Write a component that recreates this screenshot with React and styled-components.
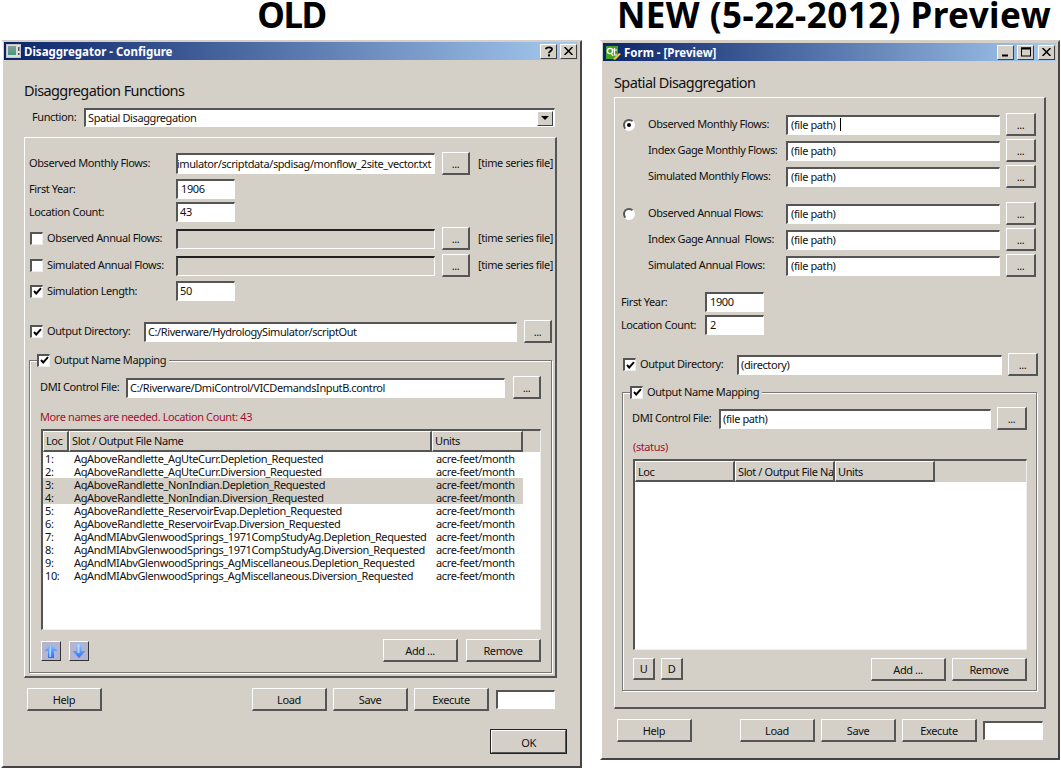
import React from "react";
import styled, { createGlobalStyle } from "styled-components";

const Global = createGlobalStyle`
  html, body { margin: 0; padding: 0; background: #fff; }
  body { font-family: "Noto Sans", "Liberation Sans", sans-serif; font-size: 11px; letter-spacing: -0.4px; color: #111; }
`;

const Page = styled.div`
  width: 1061px;
  height: 769px;
  display: flex;
  overflow: hidden;
`;
const Column = styled.div`
  width: ${(p) => p.$w}px;
  margin-left: ${(p) => p.$left}px;
  display: flex;
  flex-direction: column;
`;
const Heading = styled.h1`
  margin: 0;
  height: 40px;
  line-height: 30px;
  font-size: 35px;
  font-weight: 700;
  color: #000;
  white-space: nowrap;
  text-align: center;
  letter-spacing: ${(p) => p.$ls}px;
  transform: translateX(${(p) => p.$shift || 0}px);
`;
const Win = styled.div`
  height: ${(p) => p.$h}px;
  box-sizing: border-box;
  background: #d4d0c8;
  border-top: 2px solid #d4d0c8;
  border-left: 2px solid #fff;
  border-right: 2px solid #444;
  border-bottom: 2px solid #444;
  padding: ${(p) => p.$pt}px 2px 0 1px;
  display: flex;
  flex-direction: column;
`;
const TitleBar = styled.div`
  height: 18px;
  flex: none;
  display: flex;
  align-items: center;
  background: linear-gradient(90deg, #0a246a 0%, #a6caf0 100%);
  color: #fff;
  font-weight: 700;
  font-size: 11.5px;
  letter-spacing: 0;
  padding: 0 1px 0 2px;
  gap: 3px;
`;
const TitleText = styled.span`
  flex: 1;
  white-space: nowrap;
`;
const CapBtn = styled.div`
  width: 17px;
  height: 15px;
  box-sizing: border-box;
  background: #d4d0c8;
  border-top: 1px solid #fff;
  border-left: 1px solid #fff;
  border-right: 1px solid #404040;
  border-bottom: 1px solid #404040;
  margin-left: ${(p) => p.$gap || 0}px;
  display: flex;
  align-items: center;
  justify-content: center;
  svg { display: block; }
`;
const Body = styled.div`
  flex: 1;
  display: flex;
  flex-direction: column;
  padding-left: ${(p) => p.$pad}px;
  min-height: 0;
`;
const BigTitle = styled.div`
  font-size: 14.5px;
  letter-spacing: -0.6px;
  height: 20px;
  line-height: 20px;
  margin-top: ${(p) => p.$top}px;
  white-space: nowrap;
`;
const Row = styled.div`
  display: flex;
  align-items: center;
  height: ${(p) => p.$h || 23}px;
  margin-top: ${(p) => p.$top || 0}px;
  margin-left: ${(p) => p.$left || 0}px;
  flex: none;
`;
const Label = styled.span`
  width: ${(p) => (p.$w ? `${p.$w}px` : "auto")};
  flex: none;
  white-space: nowrap;
  padding-bottom: 2px;
  color: ${(p) => p.$color || "#111"};
  ${(p) => p.$right && `margin-left: ${p.$right}px;`}
`;
const Field = styled.div`
  width: ${(p) => p.$w}px;
  height: ${(p) => p.$h || 20}px;
  box-sizing: border-box;
  flex: none;
  background: ${(p) => (p.$off ? "#d4d0c8" : "#fff")};
  border-top: 2px solid ${(p) => (p.$off ? "#222" : "#555")};
  border-left: 2px solid ${(p) => (p.$off ? "#444" : "#555")};
  border-right: 1px solid #fff;
  border-bottom: 1px solid #fff;
  padding-left: ${(p) => p.$pad ?? 2}px;
  padding-right: ${(p) => (p.$end ? 3 : 0)}px;
  padding-bottom: 2px;
  margin-left: ${(p) => p.$left || 0}px;
  display: flex;
  align-items: center;
  justify-content: ${(p) => (p.$end ? "flex-end" : "flex-start")};
  overflow: hidden;
  white-space: nowrap;
  line-height: 1;
`;
const FieldText = styled.span`
  flex: none;
`;
const Caret = styled.i`
  width: 1px;
  height: 13px;
  background: #000;
  margin-left: 5px;
`;
const Arrow = styled.div`
  margin-left: auto;
  margin-bottom: -2px;
  width: 16px;
  height: 15px;
  box-sizing: border-box;
  background: #d4d0c8;
  border-top: 1px solid #fff;
  border-left: 1px solid #fff;
  border-right: 1px solid #404040;
  border-bottom: 1px solid #404040;
  margin-right: 1px;
  display: flex;
  align-items: center;
  justify-content: center;
  &::after {
    content: "";
    border-left: 4px solid transparent;
    border-right: 4px solid transparent;
    border-top: 4px solid #000;
  }
`;
const Btn = styled.div`
  width: ${(p) => p.$w || 75}px;
  height: ${(p) => p.$h || 23}px;
  box-sizing: border-box;
  flex: none;
  background: #d4d0c8;
  border-top: 1px solid #fff;
  border-left: 1px solid #fff;
  border-right: 2px solid #555;
  border-bottom: 2px solid #555;
  margin-left: ${(p) => p.$left || 0}px;
  display: flex;
  align-items: center;
  justify-content: center;
  line-height: 1;
  padding-top: 1px;
`;
const OkBtn = styled(Btn)`
  outline: 1px solid #222;
  outline-offset: -1px;
  border-width: 2px;
  border-right-color: #555;
  border-bottom-color: #555;
`;
const Check = styled.div`
  width: 13px;
  height: 13px;
  box-sizing: border-box;
  flex: none;
  background: #fff;
  border-top: 2px solid #555;
  border-left: 2px solid #555;
  border-right: 1px solid #eee;
  border-bottom: 1px solid #eee;
  margin-left: ${(p) => p.$left || 0}px;
  margin-right: ${(p) => p.$right || 0}px;
  display: flex;
  align-items: center;
  justify-content: center;
  svg { display: block; }
`;
const Radio = styled.div`
  width: 12px;
  height: 12px;
  flex: none;
  box-sizing: border-box;
  border-radius: 50%;
  background: #fff;
  border: 2px solid;
  border-color: #555 #fff #fff #555;
  margin-left: ${(p) => p.$left}px;
  margin-right: ${(p) => p.$right}px;
  display: flex;
  align-items: center;
  justify-content: center;
  &::after {
    content: "";
    display: ${(p) => (p.$on ? "block" : "none")};
    width: 4px;
    height: 4px;
    border-radius: 50%;
    background: #000;
  }
`;
const Panel = styled.div`
  box-sizing: border-box;
  width: ${(p) => p.$w}px;
  height: ${(p) => p.$h}px;
  margin-top: ${(p) => p.$top}px;
  flex: none;
  border-top: 1px solid #fff;
  border-left: 1px solid #fff;
  border-right: 2px solid #555;
  border-bottom: 2px solid #555;
  padding-left: ${(p) => p.$pad}px;
  display: flex;
  flex-direction: column;
`;
const Group = styled.div`
  position: relative;
  box-sizing: border-box;
  width: ${(p) => p.$w}px;
  height: ${(p) => p.$h}px;
  margin-top: ${(p) => p.$top}px;
  margin-left: ${(p) => p.$left}px;
  flex: none;
  border: 1px solid #777;
  box-shadow: inset 1px 1px 0 #fff, 1px 1px 0 #fff;
  padding-left: ${(p) => p.$pad}px;
  display: flex;
  flex-direction: column;
`;
const Legend = styled.div`
  position: absolute;
  left: ${(p) => p.$x}px;
  top: -8px;
  height: 14px;
  background: #d4d0c8;
  padding: 0 3px 0 0;
  display: flex;
  align-items: center;
  white-space: nowrap;
`;
const Table = styled.div`
  box-sizing: border-box;
  width: ${(p) => p.$w}px;
  height: ${(p) => p.$h}px;
  margin-top: ${(p) => p.$top}px;
  margin-left: 1px;
  flex: none;
  background: #fff;
  border-top: 2px solid #555;
  border-left: 2px solid #555;
  border-right: 1px solid #eee;
  border-bottom: 1px solid #eee;
  display: flex;
  flex-direction: column;
`;
const HeadRow = styled.div`
  display: flex;
  height: ${(p) => p.$h}px;
  flex: none;
  background: #d4d0c8;
`;
const HeadCell = styled.div`
  width: ${(p) => p.$w}px;
  box-sizing: border-box;
  flex: none;
  border-top: 1px solid #fff;
  border-left: 1px solid #fff;
  border-right: 2px solid #555;
  border-bottom: 2px solid #555;
  padding-left: 2px;
  padding-top: ${(p) => p.$pt || 0}px;
  padding-bottom: ${(p) => p.$pb || 0}px;
  display: flex;
  align-items: center;
  overflow: hidden;
  white-space: nowrap;
`;
const HeadFill = styled.div`
  flex: 1;
  background: #d4d0c8;
`;
const DataRow = styled.div`
  display: flex;
  height: 13px;
  width: 480px;
  flex: none;
  align-items: center;
  line-height: 13px;
  white-space: nowrap;
  letter-spacing: -0.38px;
  background: ${(p) => (p.$sel ? "#d4d0c8" : "transparent")};
`;
const Cell = styled.span`
  width: ${(p) => p.$w}px;
  padding-left: ${(p) => p.$pad}px;
  box-sizing: border-box;
  flex: none;
`;
const IconBtn = styled(Btn)`
  width: 20px;
  height: 20px;
  background: #b4b4cf;
  padding: 0;
  border-right-width: 1px;
  border-bottom-width: 1px;
  border-right-color: #333;
  border-bottom-color: #333;
  svg { display: block; }
`;
const SmallBtn = styled(Btn)`
  margin-bottom: 1px;
  padding-top: 0;
`;
const Spring = styled.div`
  flex: 1;
`;

const Tick = () => (
  <svg width="9" height="9" viewBox="0 0 9 9">
    <path d="M1 4 L3.2 6.5 L8 1.2" fill="none" stroke="#000" strokeWidth="1.9" />
  </svg>
);
const WinIcon = () => (
  <svg width="15" height="14" viewBox="0 0 15 14" style={{ flex: "none" }}>
    <defs>
      <linearGradient id="wi" x1="0" y1="0" x2="0" y2="1">
        <stop offset="0" stopColor="#8a9a9a" />
        <stop offset="1" stopColor="#3f9a80" />
      </linearGradient>
    </defs>
    <rect x="0.5" y="0.5" width="14" height="13" fill="#dcdcdc" stroke="#c4c4c4" />
    <rect x="2" y="2" width="8" height="9" fill="url(#wi)" />
    <rect x="12" y="3" width="1.5" height="4" fill="#555" />
    <rect x="12" y="9" width="1.5" height="2" fill="#555" />
  </svg>
);
const QtIcon = () => (
  <svg width="16" height="15" viewBox="0 0 16 15" style={{ flex: "none" }}>
    <path d="M1 1 H13 V12 L11 14 H1 Z" fill="#45a023" />
    <circle cx="5" cy="6" r="2.6" fill="none" stroke="#fff" strokeWidth="1.4" />
    <path d="M6 8 L8 11 M9.5 3 V10 H12 M8 5 H12" fill="none" stroke="#fff" strokeWidth="1.2" />
    <path d="M8 14 L14 8 L16 9 L10 15 Z" fill="#f0c040" />
  </svg>
);
const UpIcon = () => (
  <svg width="16" height="16" viewBox="0 0 16 16">
    <defs>
      <linearGradient id="ua" x1="0" y1="0" x2="0" y2="1">
        <stop offset="0" stopColor="#8fc8ff" />
        <stop offset="1" stopColor="#2f6cf5" />
      </linearGradient>
    </defs>
    <path d="M8 1 L14.5 8 H11 V15 H5 V8 H1.5 Z" fill="url(#ua)" />
    <path d="M8 2 L6.2 7 V14 H8 Z" fill="#bfe6ff" opacity="0.8" />
  </svg>
);
const DownIcon = () => (
  <svg width="16" height="16" viewBox="0 0 16 16">
    <defs>
      <linearGradient id="da" x1="0" y1="0" x2="0" y2="1">
        <stop offset="0" stopColor="#8fc8ff" />
        <stop offset="1" stopColor="#2f6cf5" />
      </linearGradient>
    </defs>
    <path d="M5.5 1 H10.5 V8 H14.5 L8 15 L1.5 8 H5.5 Z" fill="url(#da)" />
    <path d="M6.5 1.5 H8.5 V10 H6.5 Z" fill="#bfe6ff" opacity="0.8" />
  </svg>
);
const HelpMark = () => (
  <svg width="10" height="11" viewBox="0 0 10 11">
    <path d="M2 3.2 C2 0.8 8 0.8 8 3.2 C8 5 5 5 5 7.2" fill="none" stroke="#000" strokeWidth="1.9" />
    <rect x="4" y="8.4" width="2" height="2" fill="#000" />
  </svg>
);
const CloseX = () => (
  <svg width="9" height="8" viewBox="0 0 9 8">
    <path d="M0.5 0 L8.5 8 M8.5 0 L0.5 8" stroke="#000" strokeWidth="1.5" />
  </svg>
);
const Minus = () => (
  <svg width="10" height="10" viewBox="0 0 10 10">
    <rect x="1" y="7.5" width="6" height="2" fill="#000" />
  </svg>
);
const Max = () => (
  <svg width="10" height="10" viewBox="0 0 10 10">
    <rect x="0.5" y="1" width="9" height="8" fill="none" stroke="#000" />
    <rect x="0" y="0.5" width="10" height="2" fill="#000" />
  </svg>
);

const rows = [
  ["1:", "AgAboveRandlette_AgUteCurr.Depletion_Requested"],
  ["2:", "AgAboveRandlette_AgUteCurr.Diversion_Requested"],
  ["3:", "AgAboveRandlette_NonIndian.Depletion_Requested", true],
  ["4:", "AgAboveRandlette_NonIndian.Diversion_Requested", true],
  ["5:", "AgAboveRandlette_ReservoirEvap.Depletion_Requested"],
  ["6:", "AgAboveRandlette_ReservoirEvap.Diversion_Requested"],
  ["7:", "AgAndMIAbvGlenwoodSprings_1971CompStudyAg.Depletion_Requested"],
  ["8:", "AgAndMIAbvGlenwoodSprings_1971CompStudyAg.Diversion_Requested"],
  ["9:", "AgAndMIAbvGlenwoodSprings_AgMiscellaneous.Depletion_Requested"],
  ["10:", "AgAndMIAbvGlenwoodSprings_AgMiscellaneous.Diversion_Requested"],
];

const OldWindow = () => (
  <Column $w={581} $left={1}>
    <Heading $ls={-1.5}>OLD</Heading>
    <Win $h={728} $pt={0}>
      <TitleBar>
        <WinIcon />
        <TitleText>Disaggregator - Configure</TitleText>
        <CapBtn><HelpMark /></CapBtn>
        <CapBtn><CloseX /></CapBtn>
      </TitleBar>
      <Body $pad={20}>
        <BigTitle $top={20}>Disaggregation Functions</BigTitle>
        <Row $h={19} $top={8} $left={8}>
          <Label $w={52}>Function:</Label>
          <Field $w={471} $h={19}>
            Spatial Disaggregation
            <Arrow />
          </Field>
        </Row>
        <Panel $w={533} $h={541} $top={10} $pad={4}>
          <Row $top={14}>
            <Label $w={147}>Observed Monthly Flows:</Label>
            <Field $w={259} $h={21} $end><FieldText>C:/Riverware/HydrologySimulator/scriptdata/spdisag/monflow_2site_vector.txt</FieldText></Field>
            <Btn $w={28} $left={7}>...</Btn>
            <Label $right={8}>[time series file]</Label>
          </Row>
          <Row $top={4} $h={20}>
            <Label $w={147}>First Year:</Label>
            <Field $w={59} $pad={3}>1906</Field>
          </Row>
          <Row $top={3} $h={20}>
            <Label $w={147}>Location Count:</Label>
            <Field $w={59}>43</Field>
          </Row>
          <Row $top={5}>
            <Check $left={1} $right={4} />
            <Label $w={129}>Observed Annual Flows:</Label>
            <Field $w={259} $h={20} $off />
            <Btn $w={28} $left={7}>...</Btn>
            <Label $right={8}>[time series file]</Label>
          </Row>
          <Row $top={4}>
            <Check $left={1} $right={4} />
            <Label $w={129}>Simulated Annual Flows:</Label>
            <Field $w={259} $h={20} $off />
            <Btn $w={28} $left={7}>...</Btn>
            <Label $right={8}>[time series file]</Label>
          </Row>
          <Row $top={4} $h={20}>
            <Check $left={1} $right={4}><Tick /></Check>
            <Label $w={129}>Simulation Length:</Label>
            <Field $w={59}>50</Field>
          </Row>
          <Row $top={19}>
            <Check $left={1} $right={4}><Tick /></Check>
            <Label $w={97}>Output Directory:</Label>
            <Field $w={373}>C:/Riverware/HydrologySimulator/scriptOut</Field>
            <Btn $w={28} $left={7}>...</Btn>
          </Row>
          <Group $w={523} $h={313} $top={17} $left={0} $pad={10}>
            <Legend $x={7}>
              <Check $right={4}><Tick /></Check>
              <Label>Output Name Mapping</Label>
            </Legend>
            <Row $top={15}>
              <Label $w={86}>DMI Control File:</Label>
              <Field $w={379}>C:/Riverware/DmiControl/VICDemandsInputB.control</Field>
              <Btn $w={28} $left={8}>...</Btn>
            </Row>
            <Row $top={11} $h={14}>
              <Label $color="#a5102f">More names are needed. Location Count: 43</Label>
            </Row>
            <Table $w={500} $h={201} $top={5}>
              <HeadRow $h={21}>
                <HeadCell $w={26} $pb={2}>Loc</HeadCell>
                <HeadCell $w={363} $pb={2}>Slot / Output File Name</HeadCell>
                <HeadCell $w={91} $pb={2}>Units</HeadCell>
                <HeadFill />
              </HeadRow>
              {rows.map(([n, name, sel]) => (
                <DataRow key={n} $sel={sel}>
                  <Cell $w={31} $pad={2}>{n}</Cell>
                  <Cell $w={362} $pad={0}>{name}</Cell>
                  <Cell $w={87} $pad={0}>acre-feet/month</Cell>
                </DataRow>
              ))}
            </Table>
            <Row $top={9}>
              <IconBtn $left={1}><UpIcon /></IconBtn>
              <IconBtn $left={8}><DownIcon /></IconBtn>
              <Spring />
              <Btn>Add ...</Btn>
              <Btn $left={8}>Remove</Btn>
              <Label $w={10} />
            </Row>
          </Group>
        </Panel>
        <Row $top={10}>
          <Label $w={3} />
          <Btn>Help</Btn>
          <Btn $left={150}>Load</Btn>
          <Btn $left={6}>Save</Btn>
          <Btn $left={6}>Execute</Btn>
          <Field $w={59} $h={19} $left={7} />
        </Row>
        <Row $top={18} $h={25}>
          <Label $w={466} />
          <OkBtn $w={77} $h={25}>OK</OkBtn>
        </Row>
      </Body>
    </Win>
  </Column>
);

const FlowRow = ({ name, caret, radio, top }) => (
  <Row $top={top}>
    {radio !== undefined ? <Radio $on={radio} $left={8} $right={13} /> : <Label $w={33} />}
    <Label $w={138}>{name}</Label>
    <Field $w={214} $pad={3}>(file path){caret && <Caret />}</Field>
    <Btn $w={30} $left={6}>...</Btn>
  </Row>
);

const NewWindow = () => (
  <Column $w={460} $left={18}>
    <Heading $shift={4} $ls={0.45}>NEW (5-22-2012) Preview</Heading>
    <Win $h={720} $pt={1}>
      <TitleBar>
        <QtIcon />
        <TitleText>Form - [Preview]</TitleText>
        <CapBtn><Minus /></CapBtn>
        <CapBtn><Max /></CapBtn>
        <CapBtn $gap={1}><CloseX /></CapBtn>
      </TitleBar>
      <Body $pad={11}>
        <BigTitle $top={11}>Spatial Disaggregation</BigTitle>
        <Panel $w={432} $h={612} $top={5} $pad={0}>
          <FlowRow top={15} name="Observed Monthly Flows:" radio={true} caret />
          <FlowRow top={3} name="Index Gage Monthly Flows:" />
          <FlowRow top={3} name="Simulated Monthly Flows:" />
          <FlowRow top={14} name="Observed Annual Flows:" radio={false} />
          <FlowRow top={3} name={"Index Gage Annual\u00a0 Flows:"} />
          <FlowRow top={3} name="Simulated Annual Flows:" />
          <Row $top={15} $h={20} $left={6}>
            <Label $w={84}>First Year:</Label>
            <Field $w={59} $pad={3}>1900</Field>
          </Row>
          <Row $top={3} $h={20} $left={6}>
            <Label $w={84}>Location Count:</Label>
            <Field $w={59} $pad={3}>2</Field>
          </Row>
          <Row $top={18} $left={8}>
            <Check $right={4}><Tick /></Check>
            <Label $w={97}>Output Directory:</Label>
            <Field $w={265}>(directory)</Field>
            <Btn $w={30} $left={6}>...</Btn>
          </Row>
          <Group $w={415} $h={299} $top={16} $left={7} $pad={9}>
            <Legend $x={7}>
              <Check $right={4}><Tick /></Check>
              <Label>Output Name Mapping</Label>
            </Legend>
            <Row $top={14}>
              <Label $w={87}>DMI Control File:</Label>
              <Field $w={272}>(file path)</Field>
              <Btn $w={30} $left={6}>...</Btn>
            </Row>
            <Row $top={10} $h={14}>
              <Label $color="#a5102f" $right={1}>(status)</Label>
            </Row>
            <Table $w={394} $h={191} $top={5}>
              <HeadRow $h={21}>
                <HeadCell $w={100} $pt={1}>Loc</HeadCell>
                <HeadCell $w={100} $pt={1}>Slot / Output File Name</HeadCell>
                <HeadCell $w={100} $pt={1}>Units</HeadCell>
                <HeadFill />
              </HeadRow>
            </Table>
            <Row $top={8}>
              <SmallBtn $w={22} $h={22} $left={1}>U</SmallBtn>
              <SmallBtn $w={22} $h={22} $left={6}>D</SmallBtn>
              <Spring />
              <Btn>Add ...</Btn>
              <Btn $left={6}>Remove</Btn>
              <Label $w={9} />
            </Row>
          </Group>
        </Panel>
        <Row $top={10}>
          <Label $w={3} />
          <Btn>Help</Btn>
          <Btn $left={48}>Load</Btn>
          <Btn $left={6}>Save</Btn>
          <Btn $left={6}>Execute</Btn>
          <Field $w={60} $h={19} $left={6} />
        </Row>
      </Body>
    </Win>
  </Column>
);

export default function App() {
  return (
    <Page>
      <Global />
      <OldWindow />
      <NewWindow />
    </Page>
  );
}
